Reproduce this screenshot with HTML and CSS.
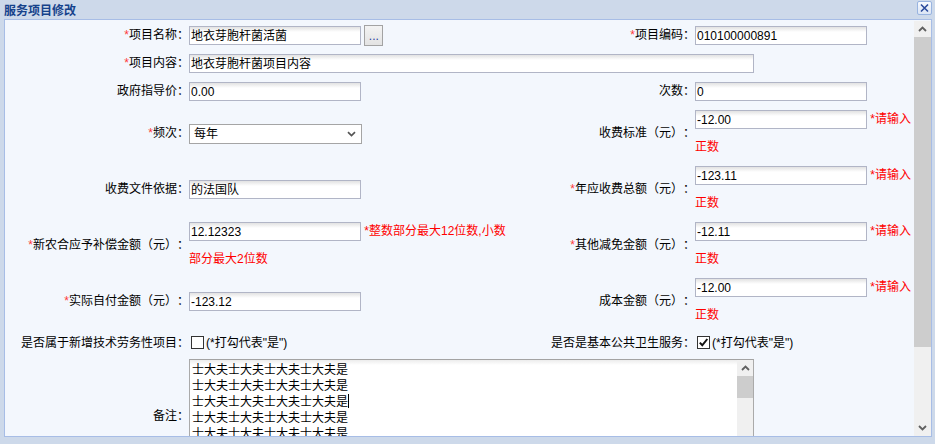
FILE: index.html
```html
<!DOCTYPE html>
<html lang="zh-CN">
<head>
    <meta charset="utf-8">
    <title>服务项目修改</title>
    <link rel="stylesheet" href="styles.css">
</head>
<body>
<div class="win">
    <div class="win-title">
        <span class="title-text">服务项目修改</span>
        <span class="close-btn">
            <svg width="15" height="14" viewBox="0 0 15 14">
                <path d="M4 3.5 L11 10.5 M11 3.5 L4 10.5" stroke="#2a4a9c" stroke-width="1.6" fill="none"/>
            </svg>
        </span>
    </div>

    <div class="panel">
        <div class="panel-body">
            <div class="form">
                <!-- 第1行 -->
                <label class="lbl"><em>*</em>项目名称：</label>
                <div class="fld"><input class="txt" value="地衣芽胞杆菌活菌"> <button class="pick">...</button></div>
                <label class="lbl"><em>*</em>项目编码：</label>
                <div class="fld"><input class="txt" value="010100000891"></div>

                <label class="lbl"><em>*</em>项目内容：</label>
                <div class="fld span3"><input class="txt wide" value="地衣芽胞杆菌项目内容"></div>

                <label class="lbl">政府指导价：</label>
                <div class="fld"><input class="txt" value="0.00"></div>
                <label class="lbl">次数：</label>
                <div class="fld"><input class="txt" value="0"></div>

                <label class="lbl"><em>*</em>频次：</label>
                <div class="fld">
                    <span class="sel">
                        <select><option>每年</option></select>
                        <svg width="9" height="6" viewBox="0 0 9 6"><path d="M1 1.2 L4.5 4.6 L8 1.2" stroke="#555" stroke-width="1.7" fill="none"/></svg>
                    </span>
                </div>
                <label class="lbl">收费标准（元）：</label>
                <div class="fld"><input class="txt" value="-12.00"> <span class="warn">*请输入正数</span></div>

                <label class="lbl">收费文件依据：</label>
                <div class="fld"><input class="txt" value="的法国队"></div>
                <label class="lbl"><em>*</em>年应收费总额（元）：</label>
                <div class="fld"><input class="txt" value="-123.11"> <span class="warn">*请输入正数</span></div>

                <label class="lbl"><em>*</em>新农合应予补偿金额（元）：</label>
                <div class="fld"><input class="txt" value="12.12323"> <span class="warn">*整数部分最大12位数,小数部分最大2位数</span></div>
                <label class="lbl"><em>*</em>其他减免金额（元）：</label>
                <div class="fld"><input class="txt" value="-12.11"> <span class="warn">*请输入正数</span></div>

                <label class="lbl"><em>*</em>实际自付金额（元）：</label>
                <div class="fld"><input class="txt" value="-123.12"></div>
                <label class="lbl">成本金额（元）：</label>
                <div class="fld"><input class="txt" value="-12.00"> <span class="warn">*请输入正数</span></div>

                <label class="lbl">是否属于新增技术劳务性项目：</label>
                <div class="fld"><span class="chk"></span>(*打勾代表"是")</div>
                <label class="lbl">是否是基本公共卫生服务：</label>
                <div class="fld"><span class="chk"><svg width="11" height="11" viewBox="0 0 11 11"><path d="M1.8 5.6 L4.3 8.3 L9.3 2" stroke="#111" stroke-width="2" fill="none"/></svg></span>(*打勾代表"是")</div>

                <label class="lbl">备注：</label>
                <div class="fld span3 memo-cell">
                    <div class="memo">
                        <div class="memo-text">
                            <div>士大夫士大夫士大夫士大夫是</div>
                            <div>士大夫士大夫士大夫士大夫是</div>
                            <div>士大夫士大夫士大夫士大夫是<span class="caret"></span></div>
                            <div>士大夫士大夫士大夫士大夫是</div>
                            <div>士大夫士大夫士大夫士大夫是</div>
                        </div>
                        <div class="sbar small">
                            <div class="arr"><svg width="9" height="6" viewBox="0 0 9 6"><path d="M1 5 L4.5 1.5 L8 5" stroke="#606060" stroke-width="1.8" fill="none"/></svg></div>
                            <div class="thumb"></div>
                        </div>
                    </div>
                </div>
            </div>
        </div>

        <div class="sbar main">
            <div class="arr"><svg width="9" height="6" viewBox="0 0 9 6"><path d="M1 5 L4.5 1.5 L8 5" stroke="#606060" stroke-width="1.8" fill="none"/></svg></div>
            <div class="thumb"></div>
            <div class="gap"></div>
            <div class="arr"><svg width="9" height="6" viewBox="0 0 9 6"><path d="M1 1 L4.5 4.5 L8 1" stroke="#606060" stroke-width="1.8" fill="none"/></svg></div>
        </div>
    </div>
</div>
</body>
</html>
```

FILE: styles.css
```css
body {
    margin: 0;
    font-family: "Liberation Sans", "Noto Sans CJK SC", sans-serif;
    font-size: 12px;
    color: #000;
    text-spacing-trim: space-all;
}

.win {
    width: 935px;
    height: 444px;
    background: #cdd9ea;
    display: flex;
    flex-direction: column;
    overflow: hidden;
}

.win-title {
    height: 19px;
    display: flex;
    align-items: center;
    justify-content: space-between;
    padding: 0 3px 0 4px;
}

.title-text {
    font-weight: bold;
    color: #15428b;
}

.close-btn {
    box-sizing: border-box;
    width: 15px;
    height: 14px;
    align-self: flex-start;
    margin-top: 1px;
    border: 1px solid #99b4e0;
    border-radius: 2px;
    background: linear-gradient(#f6f9fe, #dbe5f5);
    display: flex;
}

.close-btn svg {
    margin: -1px;
}

.panel {
    margin: 0 3px 0 4px;
    height: 416px;
    border: 1px solid #a7bde6;
    background: #f3f7fd;
    display: flex;
}

.panel-body {
    flex: 1;
    overflow: hidden;
}

.form {
    display: grid;
    grid-template-columns: 184px 321px 185px 218px;
    grid-template-rows: 28px 28px 28px 56px 56px 56px 56px 28px 118px;
    align-items: center;
    padding-top: 1px;
}

.lbl {
    text-align: right;
    white-space: nowrap;
    line-height: 16px;
}

.lbl em {
    font-style: normal;
    color: #ff3b3b;
}

.fld {
    line-height: 28px;
}

.span3 {
    grid-column: 2 / span 3;
}

.txt {
    box-sizing: border-box;
    width: 172px;
    height: 19px;
    margin: 0;
    padding: 0 1px;
    border: 1px solid #b1b5c6;
    background: linear-gradient(#e2e2e2, #fff 5px);
    font: inherit;
    color: #000;
    vertical-align: middle;
    outline: none;
}

.txt.wide {
    width: 565px;
}

.pick {
    box-sizing: border-box;
    width: 19px;
    height: 21px;
    margin: 0;
    padding: 0;
    border: 1px solid #a3a3a3;
    background: linear-gradient(#f3f3f3, #e3e3e3);
    font: inherit;
    line-height: 12px;
    color: #2a3f9e;
    vertical-align: middle;
}

.warn {
    color: #f00;
}

.sel {
    display: inline-block;
    position: relative;
    vertical-align: middle;
    line-height: 16px;
}

.sel select {
    appearance: none;
    box-sizing: border-box;
    width: 173px;
    height: 20px;
    margin: 0;
    padding: 0 0 0 4px;
    border: 1px solid #a5a5a5;
    background: #fff;
    font: inherit;
    color: #000;
}

.sel svg {
    position: absolute;
    right: 6px;
    top: 7px;
}

.chk {
    box-sizing: border-box;
    display: inline-block;
    width: 13px;
    height: 13px;
    margin: 0 2px;
    border: 1px solid #333;
    background: #fff;
    vertical-align: middle;
    position: relative;
    top: -1px;
}

.chk svg {
    display: block;
}

.memo-cell {
    line-height: normal;
}

.memo {
    box-sizing: border-box;
    width: 565px;
    height: 114px;
    border: 1px solid #aaa;
    border-top-color: #a3a3a3;
    background: linear-gradient(#ececec, #fff 5px);
    display: flex;
}

.memo-text {
    flex: 1;
    padding: 2px 2px;
    line-height: 16px;
    overflow: hidden;
}

.caret {
    display: inline-block;
    width: 1px;
    height: 14px;
    background: #000;
    vertical-align: -2px;
}

.sbar {
    background: #f0f0f0;
    display: flex;
    flex-direction: column;
}

.sbar .arr {
    height: 16px;
    display: flex;
    align-items: center;
    justify-content: center;
}

.sbar .thumb {
    background: #cdcdcd;
}

.sbar.main {
    width: 17px;
    margin: 1px 0 0 0;
}

.sbar.main .thumb {
    height: 310px;
}

.sbar.main .gap {
    flex: 1;
}

.sbar.small {
    width: 16px;
}

.sbar.small .thumb {
    height: 22px;
}
```
